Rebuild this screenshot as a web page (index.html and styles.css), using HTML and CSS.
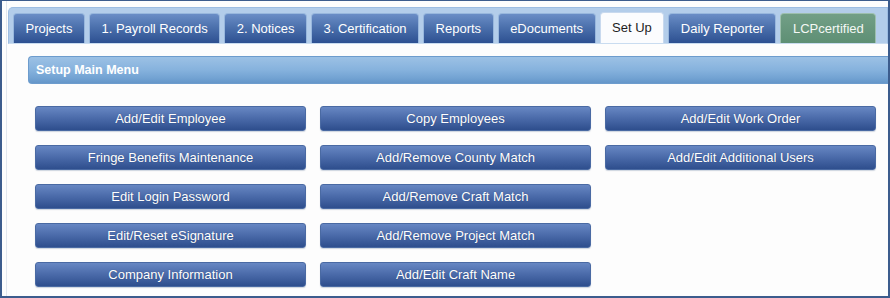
FILE: index.html
```html
<!DOCTYPE html>
<html>
<head>
<meta charset="utf-8">
<link rel="stylesheet" href="styles.css">
</head>
<body>
<div class="frame">
  <div class="page">
    <div class="tabbar">
      <div class="tab">Projects</div>
      <div class="tab">1. Payroll Records</div>
      <div class="tab">2. Notices</div>
      <div class="tab">3. Certification</div>
      <div class="tab">Reports</div>
      <div class="tab">eDocuments</div>
      <div class="tab tab-active">Set Up</div>
      <div class="tab">Daily Reporter</div>
      <div class="tab tab-green">LCPcertified</div>
    </div>
    <div class="section-bar">Setup Main Menu</div>
    <div class="menu-grid">
      <button class="menu-btn">Add/Edit Employee</button>
      <button class="menu-btn">Copy Employees</button>
      <button class="menu-btn">Add/Edit Work Order</button>
      <button class="menu-btn">Fringe Benefits Maintenance</button>
      <button class="menu-btn">Add/Remove County Match</button>
      <button class="menu-btn">Add/Edit Additional Users</button>
      <button class="menu-btn">Edit Login Password</button>
      <button class="menu-btn">Add/Remove Craft Match</button>
      <div class="empty"></div>
      <button class="menu-btn">Edit/Reset eSignature</button>
      <button class="menu-btn">Add/Remove Project Match</button>
      <div class="empty"></div>
      <button class="menu-btn">Company Information</button>
      <button class="menu-btn">Add/Edit Craft Name</button>
    </div>
  </div>
</div>
</body>
</html>
```

FILE: styles.css
```css
html, body {
  margin: 0;
  padding: 0;
  background: #ffffff;
}

.frame {
  width: 890px;
  height: 298px;
  box-sizing: border-box;
  border-style: solid;
  border-color: #3c5c8d;
  border-width: 1px 2px 2px 2px;
  overflow: hidden;
  background: #fdfdfd;
  font-family: "Liberation Sans", Arial, sans-serif;
}

.page {
  margin-left: 4px;
  height: 100%;
  border-left: 1px solid #e2e7ee;
  padding: 6px 0 0 1px;
  box-sizing: border-box;
}

.tabbar {
  display: flex;
  align-items: flex-end;
  gap: 4px;
  padding: 4px 0 0 4px;
  background: #b3cdea;
  border: 1px solid #9dbde2;
  border-bottom: 1px solid #c9dcf0;
  border-radius: 5px 0 0 0;
}

.tab {
  height: 30px;
  box-sizing: border-box;
  padding: 0 11.5px;
  display: flex;
  align-items: center;
  color: #ffffff;
  font-size: 13px;
  background: linear-gradient(to bottom, #6a8dc6 0%, #4c71ad 45%, #2d5091 100%);
  border: 1px solid #98b7dd;
  border-bottom: none;
  border-radius: 4px 4px 0 0;
  white-space: nowrap;
}

.tab-active {
  height: 31px;
  padding-bottom: 1px;
  background: #fbfcfe;
  color: #1e1e1e;
  border-color: #c8d9ee;
}

.tab-green {
  background: linear-gradient(to bottom, #729f87 0%, #5e8f74 100%);
  border-color: #9dbfae;
  color: #f4f8f5;
}

.section-bar {
  margin: 12px 0 0 20px;
  height: 28px;
  box-sizing: border-box;
  padding-left: 7px;
  display: flex;
  align-items: center;
  color: #ffffff;
  font-size: 12.5px;
  font-weight: bold;
  background: linear-gradient(to bottom, #9cc1e5 0%, #86b2dd 50%, #73a3d3 80%, #6596c9 100%);
  border: 1px solid #6d9ccd;
  border-right: none;
  border-radius: 4px 0 0 4px;
}

.menu-grid {
  display: grid;
  grid-template-columns: repeat(3, 271px);
  grid-auto-rows: 25px;
  column-gap: 14px;
  row-gap: 14px;
  margin: 22px 0 0 27px;
}

.menu-btn {
  margin: 0;
  padding: 0;
  font-family: "Liberation Sans", Arial, sans-serif;
  font-size: 13px;
  color: #ffffff;
  text-shadow: 0 0 1px rgba(20, 40, 80, 0.5);
  background: linear-gradient(to bottom, #6787c3 0%, #4a6aa9 50%, #2e4e8d 100%);
  border: 1px solid #4a6aa3;
  border-radius: 3px;
  box-shadow: 0 1px 1px rgba(120, 140, 170, 0.35);
}
```
